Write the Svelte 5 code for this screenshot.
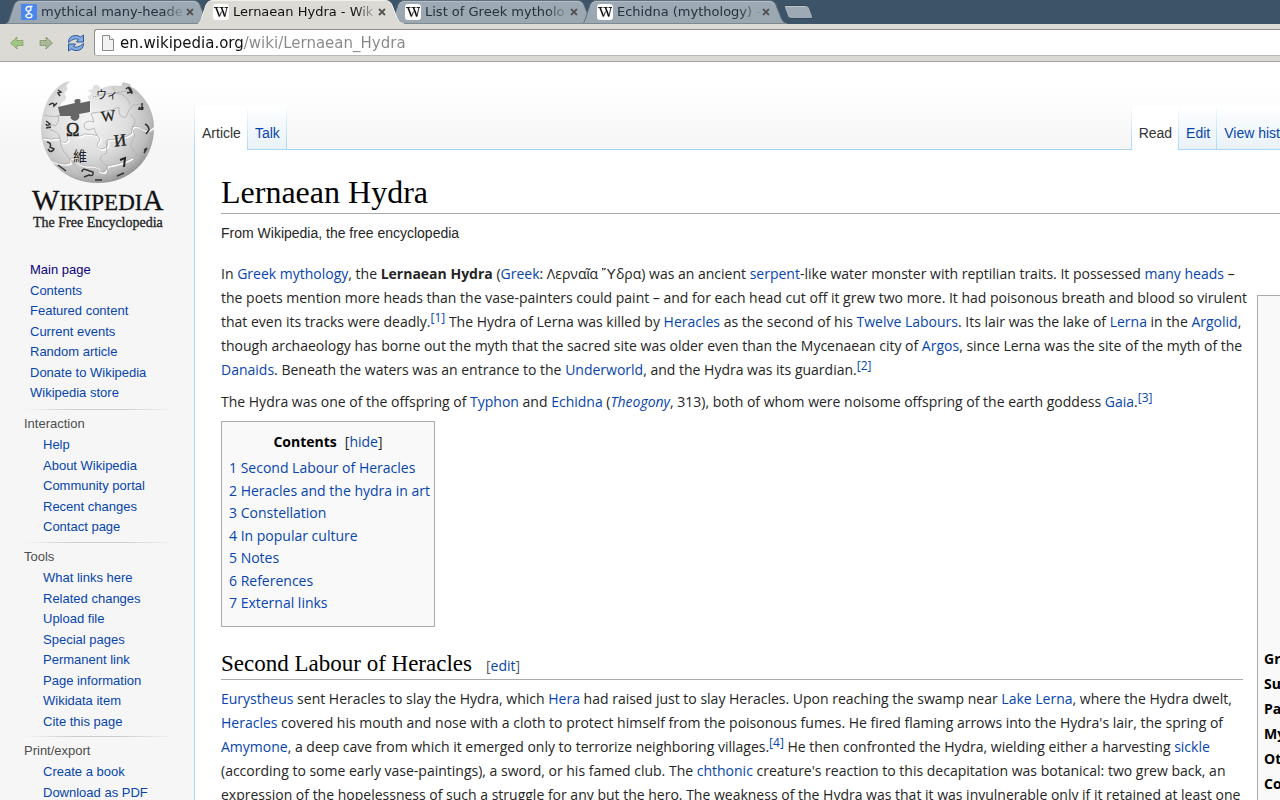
<script>
  const tabs = [
    { title: 'mythical many-heade', icon: 'g' },
    { title: 'Lernaean Hydra - Wik', icon: 'W', active: true },
    { title: 'List of Greek mytholo', icon: 'W' },
    { title: 'Echidna (mythology) -', icon: 'W' }
  ];
  const mainLinks = ['Main page', 'Contents', 'Featured content', 'Current events', 'Random article', 'Donate to Wikipedia', 'Wikipedia store'];
  const portals = [
    { name: 'Interaction', links: ['Help', 'About Wikipedia', 'Community portal', 'Recent changes', 'Contact page'] },
    { name: 'Tools', links: ['What links here', 'Related changes', 'Upload file', 'Special pages', 'Permanent link', 'Page information', 'Wikidata item', 'Cite this page'] },
    { name: 'Print/export', links: ['Create a book', 'Download as PDF'] }
  ];
  const toc = ['Second Labour of Heracles', 'Heracles and the hydra in art', 'Constellation', 'In popular culture', 'Notes', 'References', 'External links'];
  const facts = ['Gr', 'Su', 'Pa', 'My', 'Ot', 'Co'];
</script>

<div class="browser">
  <div class="tabbar">
    {#each tabs as tab}
      <div class="tab" class:active={tab.active}>
        <svg class="shape" viewBox="0 0 208 24" width="208" height="24" aria-hidden="true">
          <defs>
            <linearGradient id="idle" x1="0" y1="0" x2="0" y2="1">
              <stop offset="0" stop-color="#9daab5" /><stop offset="1" stop-color="#9aa6b0" />
            </linearGradient>
          </defs>
          <path d="M0 24 C3 22 3 20 4 17 L8 5 Q10 .5 14 .5 L187 .5 Q192 .5 194 5 L199 18 Q201 23 205 24 Z" fill={tab.active ? '#dcdad5' : 'url(#idle)'} stroke={tab.active ? '#f2f0ec' : '#5f707e'} />
          {#if !tab.active}
            <path d="M9 5 Q11 1.5 14 1.5 L187 1.5 Q191 1.5 193 5" fill="none" stroke="#b3bec7" />
            <path d="M0 23.5 H205" stroke="#7c8790" />
          {:else}
            <path d="M0 24 H206" stroke="#dcdad5" stroke-width="2" />
          {/if}
        </svg>
        <svg class="favicon" viewBox="0 0 16 16" width="16" height="16" aria-hidden="true">
          {#if tab.icon === 'g'}
            <rect width="16" height="16" rx="1" fill="#4a86ee" />
            <path d="M11.500 2.500H8Q5 2.800 5 5Q5.200 7.200 7.500 7.200Q10 7 10 5Q10 3 8.500 2.500M8 7.200Q6.300 8 8 9Q11 10 11 11.800Q10.600 13.800 7.800 13.800Q4.800 13.600 4.800 11.800Q5.200 10 8.500 9.800" fill="none" stroke="#fff" stroke-width="1.300" />
          {:else}
            <rect width="16" height="16" rx="3" fill="#fff" />
            <path d="M1 3.500h4.500M6.500 3.500h4M11.500 3.500h3.500M6.500 12.500l2-5M11.800 12.500L14 3.500" fill="none" stroke="#111" stroke-width=".9" />
            <path d="M3 3.500l3.500 9M8.500 3.500l3.300 9" stroke="#111" stroke-width="1.600" />
          {/if}
        </svg>
        <span class="title">{tab.title}</span>
        <button class="close" aria-label="Close tab">
          <svg viewBox="0 0 8 8" width="8" height="8"><path d="M1 1l6 6M7 1L1 7" stroke="#555" stroke-width="1.8" /></svg>
        </button>
      </div>
    {/each}
    <button class="newtab" aria-label="New tab">
      <svg viewBox="0 0 32 16" width="32" height="16"><path d="M2 1.500H23Q25.500 1.500 26.500 4L29.500 12Q30.500 14.500 28 14.500H8Q5.500 14.500 4.500 12L1.500 4Q.5 1.500 2 1.500Z" fill="#9daab5" stroke="#34485a" /><path d="M3 2.500H23" stroke="#bac3ca" /></svg>
    </button>
  </div>

  <div class="toolbar">
    <button aria-label="Back">
      <svg viewBox="0 0 16 16" width="16" height="16"><path d="M1.500 8L8 2v3.500h6v5H8V14Z" fill="#a3c387" stroke="#5e9133" stroke-dasharray="1 1" /></svg>
    </button>
    <button aria-label="Forward">
      <svg viewBox="0 0 16 16" width="16" height="16"><path d="M14.500 8L8 2v3.500H2v5h6V14Z" fill="#a9b899" stroke="#5d7a45" stroke-dasharray="1 1" /></svg>
    </button>
    <button aria-label="Reload">
      <svg viewBox="0 0 18 18" width="18" height="18">
        <path d="M1.500 8.500Q1.500 1.500 9 1.500Q11.500 1.500 13.500 3L16.500 1V8H9.500L11.500 5.500Q9.500 4.500 7.500 5Q4.500 5.800 1.500 8.500Z" fill="#84ace0" stroke="#2d5a9c" />
        <path d="M16.500 9.500Q16.500 16.500 9 16.500Q6.500 16.500 4.500 15L1.500 17V10H8.500L6.500 12.500Q8.500 13.500 10.500 13Q13.500 12.200 16.500 9.500Z" fill="#84ace0" stroke="#2d5a9c" />
      </svg>
    </button>
    <label class="address">
      <svg viewBox="0 0 14 16" width="14" height="16" aria-hidden="true">
        <path d="M1.500 .5H8.500L12.500 4.500V15.500H1.500Z" fill="#f2f2f2" stroke="#8b8b8b" />
        <path d="M8.500 .5V4.500H12.500" fill="#fff" stroke="#8b8b8b" />
      </svg>
      <input type="text" aria-label="Address" value="en.wikipedia.org/wiki/Lernaean_Hydra" />
    </label>
  </div>

  <div class="page">
    <aside class="side">
      <a class="logo" href="#main" aria-label="Wikipedia, The Free Encyclopedia">
        <svg viewBox="0 0 194 180" width="194" height="180">
          <defs>
            <radialGradient id="ball" cx=".42" cy=".38" r=".66">
              <stop offset="0" stop-color="#f4f4f4" /><stop offset=".5" stop-color="#dedede" /><stop offset=".8" stop-color="#bcbcbc" /><stop offset="1" stop-color="#858585" />
            </radialGradient>
            <clipPath id="globe"><path d="M70 19L66 24Q69 27 66 29Q63 32 66 34Q67 38 62 40L59 46L59 53L91 51L90 38Q87 37 88 34Q92 33 91 30L87 29L93 27Q92 23 97 23Q101 24 100 27Q110 22 121 24L123 20L130 22Q131 26 134 26Q154 43 154 66C154 98 130 121 98 121C65 121 41 98 41 66Q42 39 59 24Q64 20 70 19Z" /></clipPath>
          </defs>
          <g clip-path="url(#globe)">
            <rect x="40" y="18" width="116" height="105" fill="url(#ball)" />
            <g fill="none" stroke="#fff" stroke-width="1.500" transform="translate(1 1)">
              <path d="M42 76Q52 78 60 76Q63 84 68 78Q66 70 73 72Q80 76 84 72M84 72Q101 72 100 78Q94 84 101 87Q110 86 107 78Q125 77 132 71Q130 62 139 65Q148 72 154 64M50 98Q62 104 70 101Q68 94 76 97Q78 104 88 104Q98 103 99 109Q106 113 107 104Q124 101 132 96" />
            </g>
            <g fill="none" stroke="#b3b3b3" stroke-width=".9">
              <path d="M42 76Q52 78 60 76Q63 84 68 78Q66 70 73 72Q80 76 84 72Q101 72 100 78Q94 84 101 87Q110 86 107 78Q125 77 132 71Q130 62 139 65Q148 72 154 64" />
              <path d="M50 98Q62 104 70 101Q68 94 76 97Q78 104 88 104Q98 103 99 109Q106 113 107 104Q124 101 132 96Q145 89 150 81" />
              <path d="M44 53Q56 56 61 53M92 51Q111 49 119 45Q118 57 126 55Q129 46 133 43Q148 41 149 44" />
              <path d="M91 51L94 60Q84 57 84 65Q87 70 94 66L97 74M93 35Q108 31 121 30Q130 28 136 31" />
              <path d="M58 53Q60 60 55 64Q49 60 50 68Q58 69 60 76M60 76Q60 87 67 93L73 101M73 101Q80 112 88 118M130 52Q139 59 132 65L135 74Q128 83 133 88Q140 90 133 102M106 79L107 91Q98 94 101 99L107 104Q107 112 111 118M113 25Q115 33 121 32Q129 36 130 43" />
            </g>
            <g fill="none" stroke="#333" stroke-width="1.500">
              <path d="M58 28l3 2-3 1 2 3M49 43q5-4 5 1l3-3M46 59l4 3q-3 3-4 0M46 66l5-1M47 80q5 1 3 5l4 2q-3 5-6 0M58 103l4 3 4 3M82 110q0-4 5-2l6 2q1 5-4 3l-5 2M95 118h7M126 27q4-4 6 3l-5 1M128 25l4 7M138 47q5 1 4-6M139 45q4 5 4 0M145 62q4 2 4 6l-3 4M144 88l3-2-3 5M117 114l7-3" />
            </g>
            <g fill="#222">
              <text x="101" y="59" font-size="15" font-family="Liberation Serif, serif" transform="rotate(-7 108 54)" stroke="#222" stroke-width=".3">W</text>
              <text x="66" y="74" font-size="18" font-family="Liberation Serif, serif" stroke="#222" stroke-width=".4">Ω</text>
              <text x="114" y="84" font-size="17" font-family="Liberation Serif, serif" transform="rotate(-6 120 79)" stroke="#222" stroke-width=".4">И</text>
              <text x="73" y="99" font-size="14" font-family="Noto Sans CJK TC, sans-serif">維</text>
              <text x="96" y="37" font-size="11" font-family="Noto Sans CJK JP, sans-serif">ウィ</text>
            </g>
            <path d="M120 98l5-2-1 9" fill="none" stroke="#222" stroke-width="2" />
          </g>
          <path d="M58 45L75 41Q73 37 78 37Q82 37 80 41L90 39V50L79 52Q81 57 75 59Q69 57 71 54L60 54Z" fill="#666" />
          <text x="32" y="148" font-family="Liberation Serif, serif" fill="#111" stroke="#111" stroke-width=".3"><tspan font-size="29">W</tspan><tspan font-size="23">IKIPEDI</tspan><tspan font-size="29">A</tspan></text>
          <text x="33" y="165" font-size="14" font-family="Liberation Serif, serif" fill="#222" stroke="#222" stroke-width=".3">The Free Encyclopedia</text>
        </svg>
      </a>
      <nav class="main-links" aria-label="Navigation">
        <ul>{#each mainLinks as link, i}<li><a href="#top" class:seen={i === 0}>{link}</a></li>{/each}</ul>
      </nav>
      {#each portals as portal}
        <nav class="portal" aria-label={portal.name}>
          <h3>{portal.name}</h3>
          <ul>{#each portal.links as link}<li><a href="#top">{link}</a></li>{/each}</ul>
        </nav>
      {/each}
    </aside>

    <main>
      <div class="head">
        <nav class="views" aria-label="Namespaces"><span class="view selected">Article</span><a class="view" href="#talk">Talk</a></nav>
        <nav class="views right" aria-label="Views"><span class="view selected">Read</span><a class="view" href="#edit">Edit</a><a class="view last" href="#history">View hist</a></nav>
      </div>

      <article>
        <h1>Lernaean Hydra</h1>
        <p class="tagline">From Wikipedia, the free encyclopedia</p>
        <div class="columns">
          <div class="text">
            <p>In <a href="#a">Greek mythology</a>, the <b>Lernaean Hydra</b> (<a href="#a">Greek</a>: Λερναῖα Ὕδρα) was an ancient <a href="#a">serpent</a>-like water monster with reptilian traits. It possessed <a href="#a">many heads</a> –<br />
              the poets mention more heads than the vase-painters could paint – and for each head cut off it grew two more. It had poisonous breath and blood so virulent<br />
              that even its tracks were deadly.<sup><a href="#n">[1]</a></sup> The Hydra of Lerna was killed by <a href="#a">Heracles</a> as the second of his <a href="#a">Twelve Labours</a>. Its lair was the lake of <a href="#a">Lerna</a> in the <a href="#a">Argolid</a>,<br />
              though archaeology has borne out the myth that the sacred site was older even than the Mycenaean city of <a href="#a">Argos</a>, since Lerna was the site of the myth of the<br />
              <a href="#a">Danaids</a>. Beneath the waters was an entrance to the <a href="#a">Underworld</a>, and the Hydra was its guardian.<sup><a href="#n">[2]</a></sup></p>
            <p>The Hydra was one of the offspring of <a href="#a">Typhon</a> and <a href="#a">Echidna</a> (<a href="#a"><i>Theogony</i></a>, 313), both of whom were noisome offspring of the earth goddess <a href="#a">Gaia</a>.<sup><a href="#n">[3]</a></sup></p>

            <div class="toc">
              <div class="toc-head"><h2>Contents</h2><span>[<a href="#toc">hide</a>]</span></div>
              <ul>{#each toc as item, i}<li><a href="#s">{i + 1} {item}</a></li>{/each}</ul>
            </div>

            <div class="section"><h2>Second Labour of Heracles</h2><span>[<a href="#edit">edit</a>]</span></div>
            <p><a href="#a">Eurystheus</a> sent Heracles to slay the Hydra, which <a href="#a">Hera</a> had raised just to slay Heracles. Upon reaching the swamp near <a href="#a">Lake Lerna</a>, where the Hydra dwelt,<br />
              <a href="#a">Heracles</a> covered his mouth and nose with a cloth to protect himself from the poisonous fumes. He fired flaming arrows into the Hydra's lair, the spring of<br />
              <a href="#a">Amymone</a>, a deep cave from which it emerged only to terrorize neighboring villages.<sup><a href="#n">[4]</a></sup> He then confronted the Hydra, wielding either a harvesting <a href="#a">sickle</a><br />
              (according to some early vase-paintings), a sword, or his famed club. The <a href="#a">chthonic</a> creature's reaction to this decapitation was botanical: two grew back, an<br />
              expression of the hopelessness of such a struggle for any but the hero. The weakness of the Hydra was that it was invulnerable only if it retained at least one</p>
          </div>
          <aside class="infobox" aria-label="Lernaean Hydra">
            <dl>{#each facts as fact}<dt>{fact}</dt>{/each}</dl>
          </aside>
        </div>
      </article>
    </main>
  </div>
</div>

<style>
  :global(body) { margin: 0; overflow: hidden; }
  .browser { height: 100vh; overflow: hidden; display: flex; flex-direction: column; font: 14px/24px "Liberation Sans", Arial, sans-serif; color: #252525; background: #fff; }
  button { border: 0; padding: 0; background: none; display: flex; }
  a { color: #0645ad; text-decoration: none; }
  ul, dl { list-style: none; margin: 0; padding: 0; }
  h1, h2, h3, p { margin: 0; font-weight: normal; }

  .tabbar { flex: none; display: flex; height: 24px; padding-left: 6px; background: #3d5468; }
  .tab { position: relative; flex: 0 0 192px; height: 24px; box-sizing: border-box; display: flex; align-items: center; padding-left: 15px; font: 13px/24px "DejaVu Sans", sans-serif; color: #25313b; }
  .tab.active { z-index: 1; color: #111; }
  .shape { position: absolute; left: 0; top: 0; }
  .favicon { position: relative; flex: none; }
  .title { position: relative; width: 145px; margin-left: 4px; white-space: nowrap; -webkit-mask-image: linear-gradient(to right, #000 122px, transparent); mask-image: linear-gradient(to right, #000 122px, transparent); }
  .close { position: relative; }
  .newtab { margin: 4px 0 0 9px; height: 16px; }

  .toolbar { flex: none; display: flex; align-items: center; height: 37px; padding-left: 9px; gap: 13px; background: #dcdad5; border-bottom: 1px solid #a5a39f; }
  .address { flex: 1; display: flex; align-items: center; height: 25px; margin-left: -4px; padding-left: 6px; gap: 5px; background: #fff; border: 1px solid #8f8f8c; border-right: 0; border-bottom-color: #b9b8b4; border-radius: 3px 0 0 3px; }
  .address input { flex: 1; border: 0; padding: 0; outline: 0; height: 24px; font: 15px/24px "DejaVu Sans", sans-serif; color: transparent; background: linear-gradient(to right, #111 124px, #888 124px); -webkit-background-clip: text; background-clip: text; }

  .page { flex: 1; min-height: 0; display: grid; grid-template-columns: 194px minmax(0, 1fr); background: linear-gradient(#fff, #fff 20px, #f6f6f6 88px); }
  .side { font-size: 13px; line-height: 20px; }
  .logo { display: block; height: 180px; }
  .main-links { padding: 18px 0 1px 30px; }
  .portal { padding: 5px 0 0 24px; margin-top: 4px; background: linear-gradient(to right, #ccc0, #ccc 33%, #ccc 66%, #ccc0) 24px 0 / 150px 1px no-repeat; }
  .portal h3 { font-size: 13px; line-height: 20px; color: #4d4d4d; }
  .portal ul { padding: 1px 0 0 19px; }
  .side li { height: 21px; }
  .side li:nth-child(even) { height: 20px; }
  .side .seen { color: #0b0080; }

  main { display: flex; flex-direction: column; min-width: 0; }
  .head { flex: none; height: 88px; display: flex; justify-content: space-between; align-items: flex-end; overflow: hidden; background: linear-gradient(#a7d7f9, #a7d7f9) bottom / 100% 1px no-repeat; }
  .views { display: flex; height: 45px; padding-left: 1px; background: linear-gradient(#a7d7f900, #a7d7f9) left / 1px 100% no-repeat; font-size: 14px; line-height: 20px; }
  .view { box-sizing: border-box; height: 45px; padding: 18px 7px 0; white-space: nowrap; color: #0645ad; background: linear-gradient(#a7d7f900, #a7d7f9) right / 1px 100% no-repeat, linear-gradient(#a7d7f9, #a7d7f9) bottom / 100% 1px no-repeat, linear-gradient(#fff, #e8f2f8); }
  .view.selected { color: #333; background: linear-gradient(#a7d7f900, #a7d7f9) right / 1px 100% no-repeat, #fff; }
  .view.last { padding-right: 0; background: linear-gradient(#a7d7f9, #a7d7f9) bottom / 100% 1px no-repeat, linear-gradient(#fff, #e8f2f8); }

  article { flex: 1; padding: 22px 0 0 26px; border-left: 1px solid #a7d7f9; background: #fff; }
  h1 { font: 32px/40px "Liberation Serif", "Times New Roman", serif; color: #000; border-bottom: 1px solid #aaa; padding-bottom: 1px; }
  .tagline { font-size: 14px; line-height: 20px; margin-top: 9px; }
  .columns { display: grid; grid-template-columns: minmax(0, 1fr) 23px; column-gap: 14px; margin-top: 19px; font-family: "Open Sans", "Liberation Sans", sans-serif; }
  .text p { white-space: nowrap; margin-bottom: 8px; }
  sup { font-size: 12px; line-height: 1; vertical-align: 5px; }
  .toc { display: inline-block; box-sizing: border-box; width: 214px; margin-top: -1px; padding: 8px 7px 11px; background: #f9f9f9; border: 1px solid #aaa; }
  .toc-head { display: flex; justify-content: center; gap: 8px; }
  .toc-head h2 { font-size: 14px; font-weight: bold; color: #000; }
  .toc ul { margin-top: 3px; line-height: 22px; }
  .toc li { height: 23px; white-space: nowrap; }
  .toc li:nth-child(even) { height: 22px; }
  .section { display: flex; align-items: baseline; gap: 14px; margin: 22px 0 7px; border-bottom: 1px solid #aaa; color: #555; }
  .section h2 { font: 23px/30px "Liberation Serif", "Times New Roman", serif; color: #000; }
  .infobox { margin-top: 33px; padding: 351px 0 0 6px; background: #f9f9f9; border: 1px solid #aaa; border-right: 0; color: #000; font-weight: bold; }
  .infobox dt { height: 25px; }
</style>
